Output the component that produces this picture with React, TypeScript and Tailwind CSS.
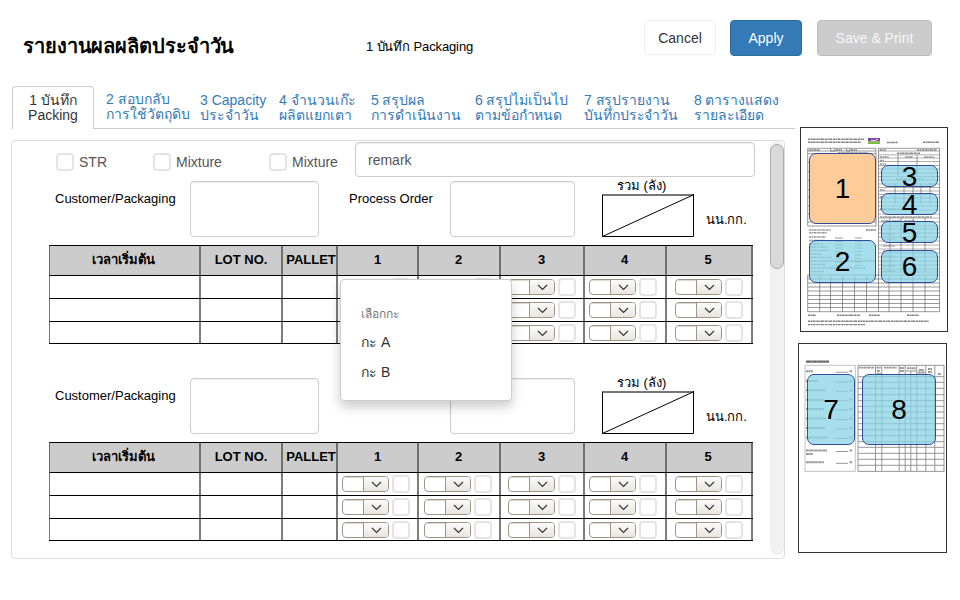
import React from "react";

const tabs = [
  { a: "2 สอบกลับ", b: "การใช้วัตถุดิบ", cls: "w-[94px] pt-[6px]" },
  { a: "3 Capacity", b: "ประจำวัน", cls: "w-[79px] pt-[7px]" },
  { a: "4 จำนวนเก๊ะ", b: "ผลิตแยกเตา", cls: "w-[92px] pt-[7px]" },
  { a: "5 สรุปผล", b: "การดำเนินงาน", cls: "w-[104px] pt-[7px] tracking-[-0.1px]" },
  { a: "6 สรุปไม่เป็นไป", b: "ตามข้อกำหนด", cls: "w-[109px] pt-[7px] tracking-[-0.1px]" },
  { a: "7 สรุปรายงาน", b: "บันทึกประจำวัน", cls: "w-[110px] pt-[7px] tracking-[-0.08px]" },
  { a: "8 ตารางแสดง", b: "รายละเอียด", cls: "w-[101px] pt-[7px] tracking-[-0.1px]" },
];

const columns = [
  { label: "เวลาเริ่มต้น", w: "w-[151px]", pad: "", head: "pr-[2px]" },
  { label: "LOT NO.", w: "w-[82px]", pad: "", head: "" },
  { label: "PALLET", w: "w-[55px]", pad: "", head: "pl-[3px]" },
  { label: "1", w: "w-[81px]", pad: "pl-[4px]", head: "" },
  { label: "2", w: "w-[82px]", pad: "pl-[5px]", head: "pr-px" },
  { label: "3", w: "w-[84px]", pad: "pl-[7px]", head: "pr-px" },
  { label: "4", w: "w-[82px]", pad: "pl-[4px]", head: "pr-px" },
  { label: "5", w: "w-[86px]", pad: "pl-[8px]", head: "pr-[2px]" },
];

function MiniSelect() {
  return (
    <div className="flex h-4 w-[47px] shrink-0 overflow-hidden rounded-[4px] border border-[#a09485] bg-white">
      <div className="w-[21px] border-r border-[#a09485] shadow-[inset_0_1px_0_#ddd8d2]" />
      <div className="flex flex-1 items-center justify-center bg-linear-to-b from-[#fcfbfa] to-[#e9e6df]">
        <svg width="11" height="7" viewBox="0 0 11 7" fill="none" stroke="#333" strokeWidth="1.1">
          <path d="M1 1 5.5 5.5 10 1" />
        </svg>
      </div>
    </div>
  );
}

function CheckBox() {
  return <div className="size-[18px] shrink-0 rounded-[4px] border-2 border-[#e4e4e4] bg-white" />;
}

function EntryTable() {
  const rows = ["h-[23px]", "h-[23px]", "h-[22px]"];
  return (
    <div className="ml-[37px] w-[704px] border-b border-black">
      <div className="flex h-[30px] border-t border-l border-t-black border-l-[#666] bg-[#ccc]">
        {columns.map((c, i) => (
          <div
            key={i}
            className={`${c.w} ${c.head} shrink-0 border-r-2 border-[#707070] text-center text-[13px] font-bold leading-[28px] whitespace-nowrap`}
          >
            {c.label}
          </div>
        ))}
      </div>
      {rows.map((h, r) => (
        <div key={r} className={`flex border-t border-l border-t-black border-l-[#777] ${h}`}>
          {columns.map((c, i) => (
            <div key={i} className={`${c.w} ${c.pad} flex shrink-0 items-start border-r-2 border-[#7c7c7c] pt-[2px]`}>
              {i > 2 && (
                <div className="flex items-center gap-[3px]">
                  <MiniSelect />
                  <CheckBox />
                </div>
              )}
            </div>
          ))}
        </div>
      ))}
    </div>
  );
}

function Section() {
  const field = "h-[56px] rounded-[4px] border border-[#ccc] shadow-[inset_0_1px_1px_rgba(0,0,0,0.075)]";
  return (
    <div>
      <div className="flex h-[64px] items-start pl-[43px] text-[13px] whitespace-nowrap">
        <div className="w-[135px] pt-[10px] leading-[16px]">Customer/Packaging</div>
        <div className={`w-[129px] ${field}`} />
        <div className="ml-[30px] w-[101px] pt-[10px] leading-[16px]">Process Order</div>
        <div className={`w-[125px] ${field}`} />
        <div className="ml-[27px] w-[92px]">
          <div className="h-[13px] pl-[15px] leading-[10px]">รวม (ลัง)</div>
          <svg className="block" width="92" height="43" viewBox="0 0 92 43" fill="none" stroke="#000">
            <path d="M0 1H92" stroke="#777" strokeWidth="2" />
            <path d="M.5 1V42.5H91.5V0M.5 42.5 91 1" strokeWidth="1" />
          </svg>
        </div>
        <div className="ml-[12px] pt-[31px] leading-[16px] tracking-[-0.05px]">นน.กก.</div>
      </div>
      <EntryTable />
    </div>
  );
}

function PageOne() {
  const sub = [24, 27.8, 31, 34.5, 38.5, 42, 46, 49.5, 53, 57, 60.5, 64, 67.5, 71, 75, 79, 83, 87, 91, 95, 99, 102, 106, 110, 114, 118, 122, 126, 130, 134, 138, 142, 145];
  const grid = [148, 152, 156, 160, 164, 168.5, 172.5, 176.5, 180.5, 184.7];
  const cols = [7.7, 19.7, 30.5, 42.5, 54.5, 66.5, 78.5, 89, 101, 113, 125, 139.5];
  const notes = [103, 105.7, 110, 113.5, 117, 120, 123.5, 127, 130.5, 134, 137.5, 141, 144.5];
  return (
    <svg className="block" width="146" height="203" viewBox="1 1 146 203" fill="none">
      <g stroke="#555" strokeWidth="1.4" strokeDasharray="2.4 .5 1.3 .4 3 .7">
        <path d="M8 12.3H64M8 15.2H61M87 15.5H98M123 15.2H139" opacity=".75" />
        <path d="M9 23H20M36 23H42M51 23H57M80 23H86M117 23H137M38 26H68M97 26.3H120" opacity=".7" />
        <path d="M80 30H89M105 30H113M124 30H134M80 33.5H84M80 37H86M96 52H123M80 63H85M80 70H86M80 82H107M80 90H132M81 94H90M92 94H101M104 94H115" opacity=".6" />
        {[107, 112, 119, 124, 129, 134, 139, 144].map((y) => (
          <path key={y} d={`M83 ${y}H95`} opacity=".5" />
        ))}
        {notes.map((y, i) => (
          <path key={y} d={`M9 ${y}H${[31, 27, 26, 25, 23, 27, 28, 22, 32, 75, 26, 66, 24][i]}`} opacity=".6" />
        ))}
        <path d="M66 103H76M8 188.3H16M37 188.3H60M69 188.3H80M107 188.3H119M8 194.3H129M8 197.6H65" opacity=".75" />
      </g>
      <rect x="68" y="11" width="12" height="3.4" fill="#80469b" />
      <rect x="68" y="14.4" width="12" height="2.6" fill="#83bb48" />
      <path d="M71 13.4h4l3-1" stroke="#fff" strokeWidth=".8" />
      <g stroke="#555" strokeWidth=".6">
        <path d="M7.7 99V21.3H76V99ZM78.5 21.3H139.5V148M78.5 21.3V148M7.7 24H76M7.7 26.7H76M30.5 21.3V24H35V21.3M46.5 21.3V24H50V21.3" />
        <path d="M7.7 35.5H76M7.7 44.5H76M7.7 53.5H76M7.7 63H76M7.7 70H76M7.7 79H76M7.7 87H76M7.7 95H76" />
        {sub.map((y) => (
          <path key={y} d={`M78.5 ${y}H139.5`} opacity=".8" />
        ))}
        <path d="M98 28V49M117 28V49M95 56V77M104 56V77M113 56V77M121 56V77M130 56V77M90 91V145M101 91V145M113 91V145M125 91V145" />
        {notes.slice(2, 11).map((y) => (
          <path key={y} d={`M35 ${y + 1}H43M55 ${y + 1}H62`} />
        ))}
        {grid.map((y) => (
          <path key={y} d={`M7.7 ${y}H139.5`} />
        ))}
        {cols.map((x) => (
          <path key={x} d={`M${x} 148V184.7`} />
        ))}
      </g>
    </svg>
  );
}

function PageTwo() {
  const rows = [33.7, 39.3, 45.3, 51.7, 57.7, 63.3, 69, 75, 80.7, 86.7, 92.7, 98.7, 104.3, 110.3, 116.3, 122.3];
  const cols = [77.5, 83.8, 101.2, 107.2, 112.8, 118.8, 127.8, 136.8];
  const items = [28.3, 38, 47.3, 56.7, 66, 75.5, 85, 94.5, 107.5, 119.3];
  const ends = [15, 20, 28, 26, 26, 28, 27, 30, 29, 26];
  return (
    <svg className="block" width="147" height="208" viewBox="1 1 147 208" fill="none">
      <path d="M8 18.6H31" stroke="#666" strokeWidth="2.2" strokeDasharray="4 .2 2 .2" />
      <g stroke="#8a8a8a" strokeWidth=".9">
        <rect x="7" y="22.3" width="50.3" height="106" stroke="#bbb" />
        <rect x="60" y="22.3" width="86" height="106" />
        {rows.map((y) => (
          <path key={y} d={`M60 ${y}H146`} />
        ))}
        {cols.map((x) => (
          <path key={x} d={`M${x} ${x === 112.8 ? 28 : 22.3}V128.3`} />
        ))}
        <path d="M107.2 28H118.8" />
        {items.map((y) => (
          <path key={y} d={`M38 ${y + 1}H50`} />
        ))}
      </g>
      <g stroke="#777" strokeWidth="1.9" strokeDasharray="2.5 .3 1.2 .3" opacity=".75">
        {items.map((y, i) => (
          <path key={y} d={`M8 ${y}H${ends[i]}M51.5 ${y}H54`} />
        ))}
        <path d="M8 111H15M61 24.6H76M78.5 24.6H83M86 24.6H99M102 25H106M109 25.3H118M121 27H126M130 26H134M79 28H82M79 31H83M102 28H106M120 29.5H127M130 29H134M140 31H143" />
      </g>
    </svg>
  );
}

function Zone({ n, cls }: { n: string; cls: string }) {
  return (
    <div className={`absolute flex items-center justify-center rounded-[7px] border border-[#314b9b] text-[28px] leading-none ${cls}`}>
      {n}
    </div>
  );
}

export default function App() {
  return (
    <div className="relative flex h-[600px] w-[960px] flex-col overflow-hidden bg-white font-['Liberation_Sans',Arial,sans-serif] text-black">
      <header className="flex h-[86px] shrink-0 items-start pl-[23px]">
        <h1 className="w-[343px] pt-[34px] text-[20px] leading-[24px] font-bold tracking-[-0.1px] whitespace-nowrap">รายงานผลผลิตประจำวัน</h1>
        <div className="w-[278px] pt-[39px] text-[13px] leading-[16px] tracking-[-0.13px] whitespace-nowrap">1 บันทึก Packaging</div>
        <div className="flex pt-[20px] text-[14px]">
          <button className="h-[35px] w-[72px] rounded-[4px] border border-[#eee] pt-px text-[#333]">Cancel</button>
          <button className="ml-[14px] h-[36px] w-[72px] rounded-[4px] border border-[#2e6da4] bg-[#337ab7] text-white">Apply</button>
          <button className="ml-[15px] h-[36px] w-[115px] rounded-[4px] border border-[#bfbfbf] bg-[#ccc] text-[#f7f7f7]">Save &amp; Print</button>
        </div>
      </header>

      <div className="flex min-h-0 flex-1">
        <div className="w-[798px] shrink-0 pl-[11px]">
          <nav className="flex h-[43px] w-[784px] pl-px text-[14px] leading-[15px] whitespace-nowrap text-[#337ab7]">
            <div className="w-[82px] rounded-t-[4px] border border-b-0 border-[#ccc] pt-[6px] text-center text-[#333]">
              1 บันทึก
              <br />
              Packing
            </div>
            <div className="flex flex-1 border-b border-[#ccc] pl-[12px]">
              {tabs.map((t) => (
                <div key={t.a} className={`${t.cls} shrink-0`}>
                  {t.a}
                  <br />
                  {t.b}
                </div>
              ))}
            </div>
          </nav>

          <main className="mt-[11px] flex h-[419px] w-[774px] rounded-[4px] border border-[#ddd]">
            <div className="w-[758px] shrink-0">
              <div className="flex h-[40px] items-start pl-[44px] text-[14px] text-[#555]">
                {["STR", "Mixture", "Mixture"].map((t, i) => (
                  <label key={i} className={`flex items-center gap-[5px] pt-[12px] leading-[18px] ${["w-[97px]", "w-[116px]", "w-[87px]"][i]}`}>
                    <CheckBox />
                    {t}
                  </label>
                ))}
                <div className="mt-px -ml-px h-[35px] w-[400px] rounded-[4px] border border-[#ccc] pl-[12px] leading-[34px] shadow-[inset_0_1px_1px_rgba(0,0,0,0.075)]">
                  remark
                </div>
              </div>
              <Section />
              <div className="h-[34px]" />
              <Section />
            </div>
            <div className="h-[414px] w-[14px] rounded-[7px] bg-[#f1f1f1] pt-[3px]">
              <div className="h-[125px] w-[14px] rounded-full border border-[#aaa] bg-[#d9d9d9]" />
            </div>
          </main>
        </div>

        <aside className="w-[150px] shrink-0 pt-[41px]">
          <div className="relative ml-[2px] h-[205px] w-[148px] border border-[#333]">
            <PageOne />
            <Zone n="1" cls="left-[8px] top-[25px] h-[71px] w-[67px] bg-[#ffcc99]" />
            <Zone n="2" cls="left-[8px] top-[112px] h-[43px] w-[67px] bg-[#8ad3e6]/75" />
            <Zone n="3" cls="left-[80px] top-[37px] h-[22px] w-[57px] bg-[#8ad3e6]/75 pt-[2px]" />
            <Zone n="4" cls="left-[80px] top-[65px] h-[22px] w-[57px] bg-[#8ad3e6]/75 pt-[2px]" />
            <Zone n="5" cls="left-[80px] top-[93px] h-[22px] w-[57px] bg-[#8ad3e6]/75 pt-[2px]" />
            <Zone n="6" cls="left-[80px] top-[122px] h-[33px] w-[57px] bg-[#8ad3e6]/75" />
          </div>
          <div className="relative mt-[11px] h-[210px] w-[149px] border border-[#333]">
            <PageTwo />
            <Zone n="7" cls="left-[8px] top-[30px] h-[71px] w-[48px] bg-[#8ad3e6]/75" />
            <Zone n="8" cls="left-[63px] top-[30px] h-[71px] w-[74px] bg-[#8ad3e6]/75" />
          </div>
        </aside>
      </div>

      <div className="absolute top-[279px] left-[340px] h-[122px] w-[172px] rounded-[4px] border border-[#ccc] bg-white pl-[20px] text-[14px] whitespace-nowrap text-[#333] shadow-[0_6px_12px_rgba(0,0,0,0.2)]">
        <div className="pt-[26px] text-[12px] leading-[16px] text-[#777]">เลือกกะ</div>
        <div className="pt-[12px] leading-[16px]">กะ A</div>
        <div className="pt-[14px] leading-[16px]">กะ B</div>
      </div>
    </div>
  );
}
